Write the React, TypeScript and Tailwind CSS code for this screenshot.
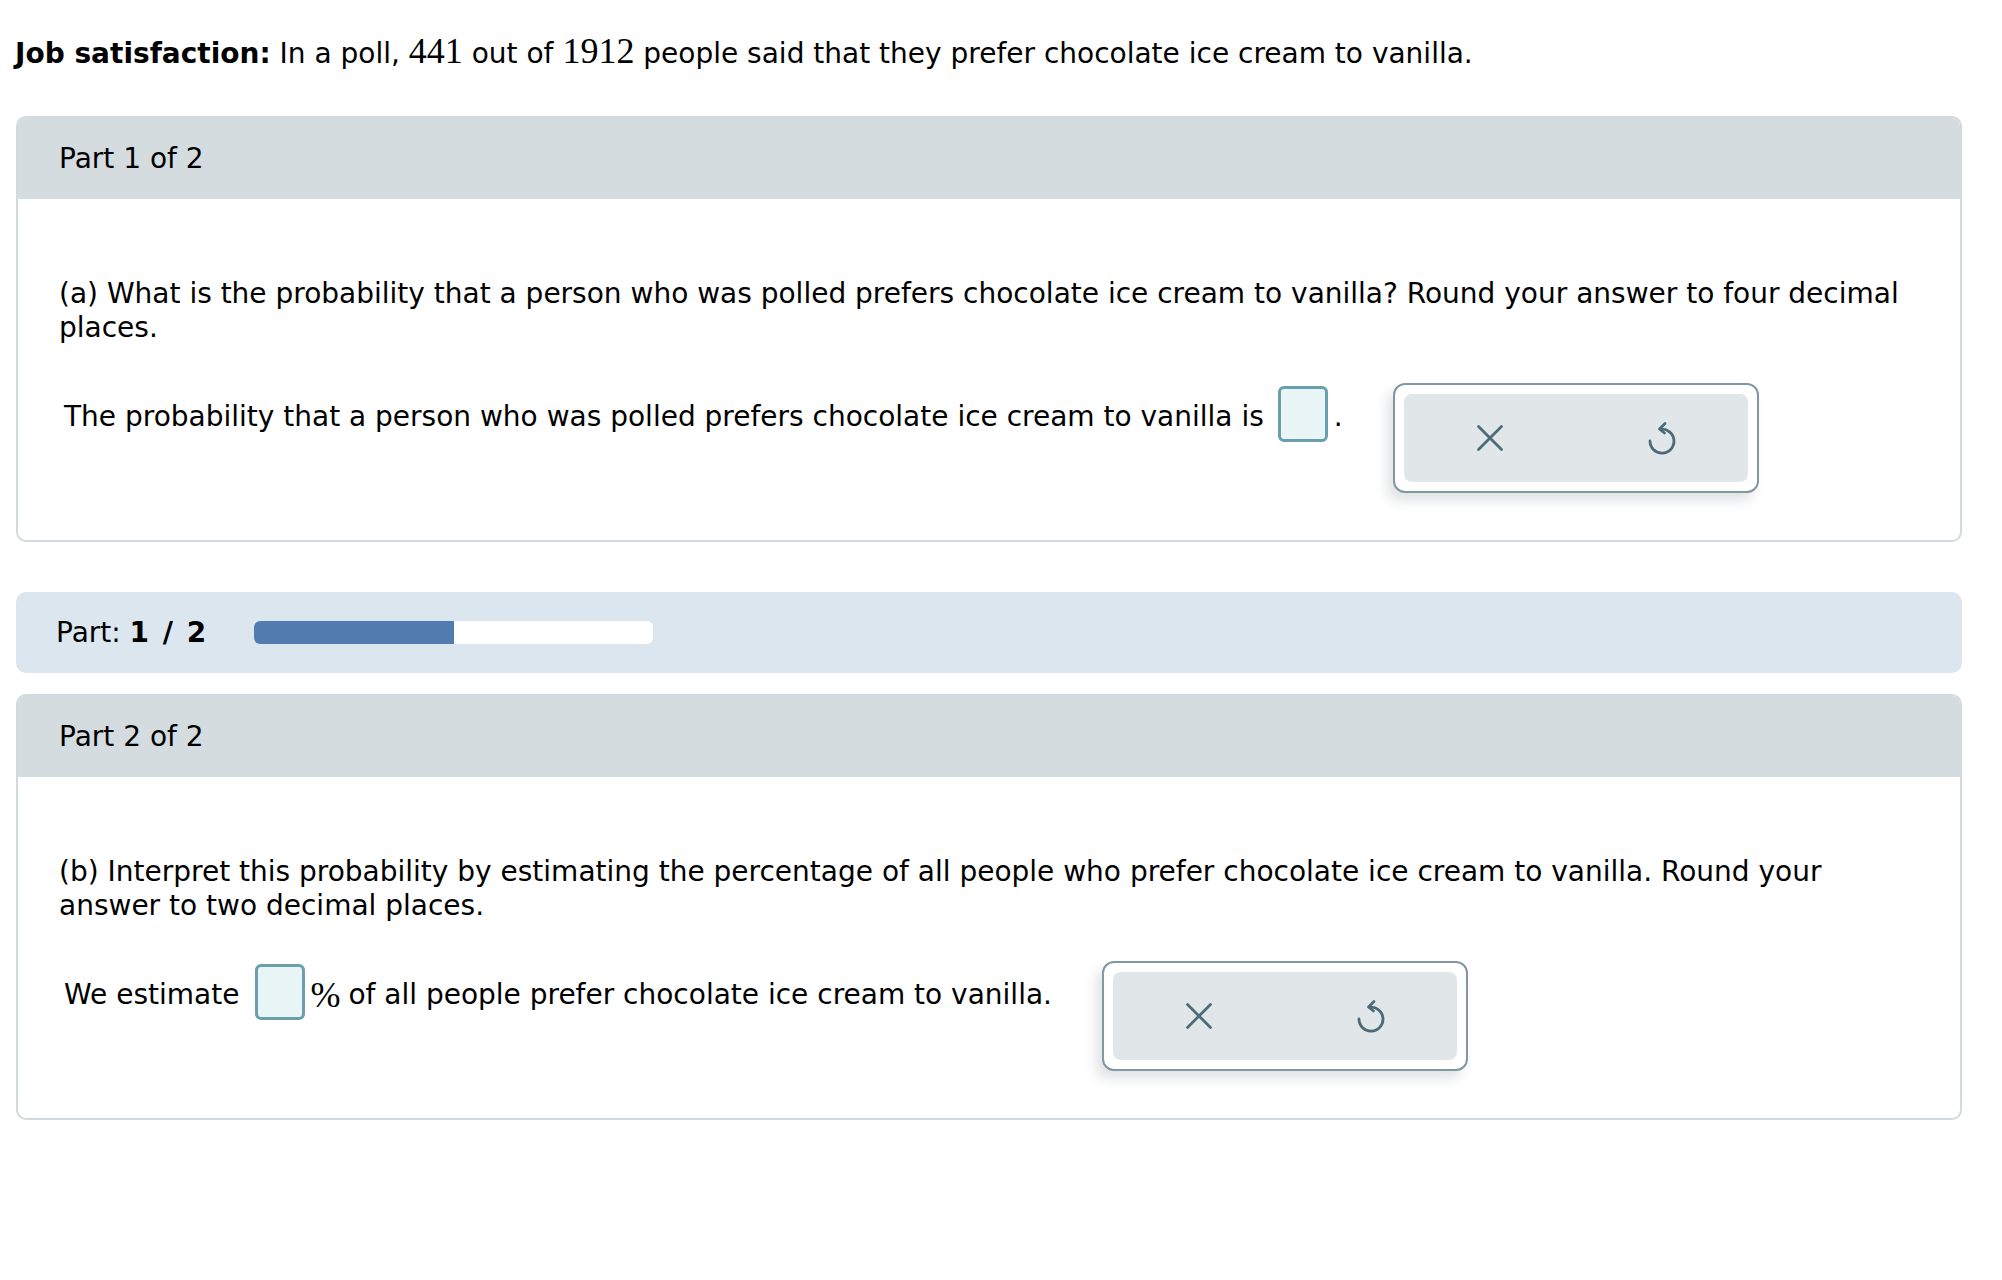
import React from "react";

const font = { fontFamily: '"DejaVu Sans", Verdana, sans-serif' };
const serif = { fontFamily: '"Liberation Serif", "Times New Roman", serif' };

function XIcon() {
  return (
    <svg width="28" height="28" viewBox="0 0 28 28" fill="none" stroke="#4b6b78" strokeWidth="2.8" strokeLinecap="round">
      <path d="M2.5 2.5L25.5 25.5M25.5 2.5L2.5 25.5" />
    </svg>
  );
}

function UndoIcon() {
  return (
    <svg width="32" height="34" viewBox="0 0 32 34" fill="none" stroke="#4b6b78" strokeWidth="2.8" strokeLinecap="round" strokeLinejoin="round">
      <path d="M14.5 8.2A12 12 0 1 1 4 20" />
      <path d="M19 2.5L13.5 8L18.5 12" />
    </svg>
  );
}

function AnswerBox() {
  return <span className="inline-block w-[50px] h-[56px] rounded-md border-[3px] border-[#6a9fae] bg-[#e8f4f6]" />;
}

function Tools() {
  return (
    <div className="w-[366px] h-[110px] rounded-xl border-2 border-[#7f98a3] bg-white p-[9px] shadow-[-6px_8px_12px_rgba(40,60,70,0.14)]">
      <div className="flex h-full rounded-lg bg-[#e1e6e9]">
        <button className="flex flex-1 items-center justify-center">
          <XIcon />
        </button>
        <button className="flex flex-1 items-center justify-center">
          <UndoIcon />
        </button>
      </div>
    </div>
  );
}

function PartCard({ title, children }: { title: string; children: React.ReactNode }) {
  return (
    <div className="overflow-hidden rounded-[10px] border-2 border-[#d3dadf] bg-white">
      <div className="flex h-[81px] items-center bg-[#d4dce0] pl-[41px]">{title}</div>
      <div className="px-[41px] pt-[78px] pb-[47px]">{children}</div>
    </div>
  );
}

export default function App() {
  return (
    <div className="min-h-screen bg-white pl-4 pr-[40px] pt-[37px] text-[28px] leading-[34px] text-black" style={font}>
      <p className="-ml-px">
        <b>Job satisfaction:</b> In a poll,{" "}
        <span className="text-[36px] leading-[20px]" style={serif}>441</span> out of{" "}
        <span className="text-[36px] leading-[20px]" style={serif}>1912</span> people said that they prefer chocolate
        ice cream to vanilla.
      </p>

      <div className="mt-[45px]">
        <PartCard title="Part 1 of 2">
          <p>
            (a) What is the probability that a person who was polled prefers chocolate ice cream to vanilla? Round your
            answer to four decimal places.
          </p>
          <div className="mt-[38px] flex items-start pl-[5px]">
            <div className="mt-[6px] flex h-[56px] items-center">
              <span>The probability that a person who was polled prefers chocolate ice cream to vanilla is</span>
              <span className="mb-[6px] ml-[14px] flex">
                <AnswerBox />
              </span>
              <span className="ml-[6px]">.</span>
            </div>
            <div className="ml-[50px]">
              <Tools />
            </div>
          </div>
        </PartCard>
      </div>

      <div className="mt-[50px] flex h-[81px] items-center rounded-[10px] bg-[#dce6ef] pl-[40px]">
        <span>
          Part: <b className="tracking-[2px]">1 / 2</b>
        </span>
        <div className="ml-[46px] flex h-[23px] w-[399px] overflow-hidden rounded-md bg-white">
          <div className="h-full w-1/2 bg-[#527cb0]" />
        </div>
      </div>

      <div className="mt-[21px]">
        <PartCard title="Part 2 of 2">
          <p>
            (b) Interpret this probability by estimating the percentage of all people who prefer chocolate ice cream to
            vanilla. Round your answer to two decimal places.
          </p>
          <div className="mt-[38px] flex items-start pl-[5px]">
            <div className="mt-[6px] flex h-[56px] items-center">
              <span>We estimate</span>
              <span className="mb-[6px] ml-[16px] flex">
                <AnswerBox />
              </span>
              <span className="ml-[5px] text-[36px]" style={serif}>%</span>
              <span className="ml-[8px]">of all people prefer chocolate ice cream to vanilla.</span>
            </div>
            <div className="ml-[50px]">
              <Tools />
            </div>
          </div>
        </PartCard>
      </div>
    </div>
  );
}
